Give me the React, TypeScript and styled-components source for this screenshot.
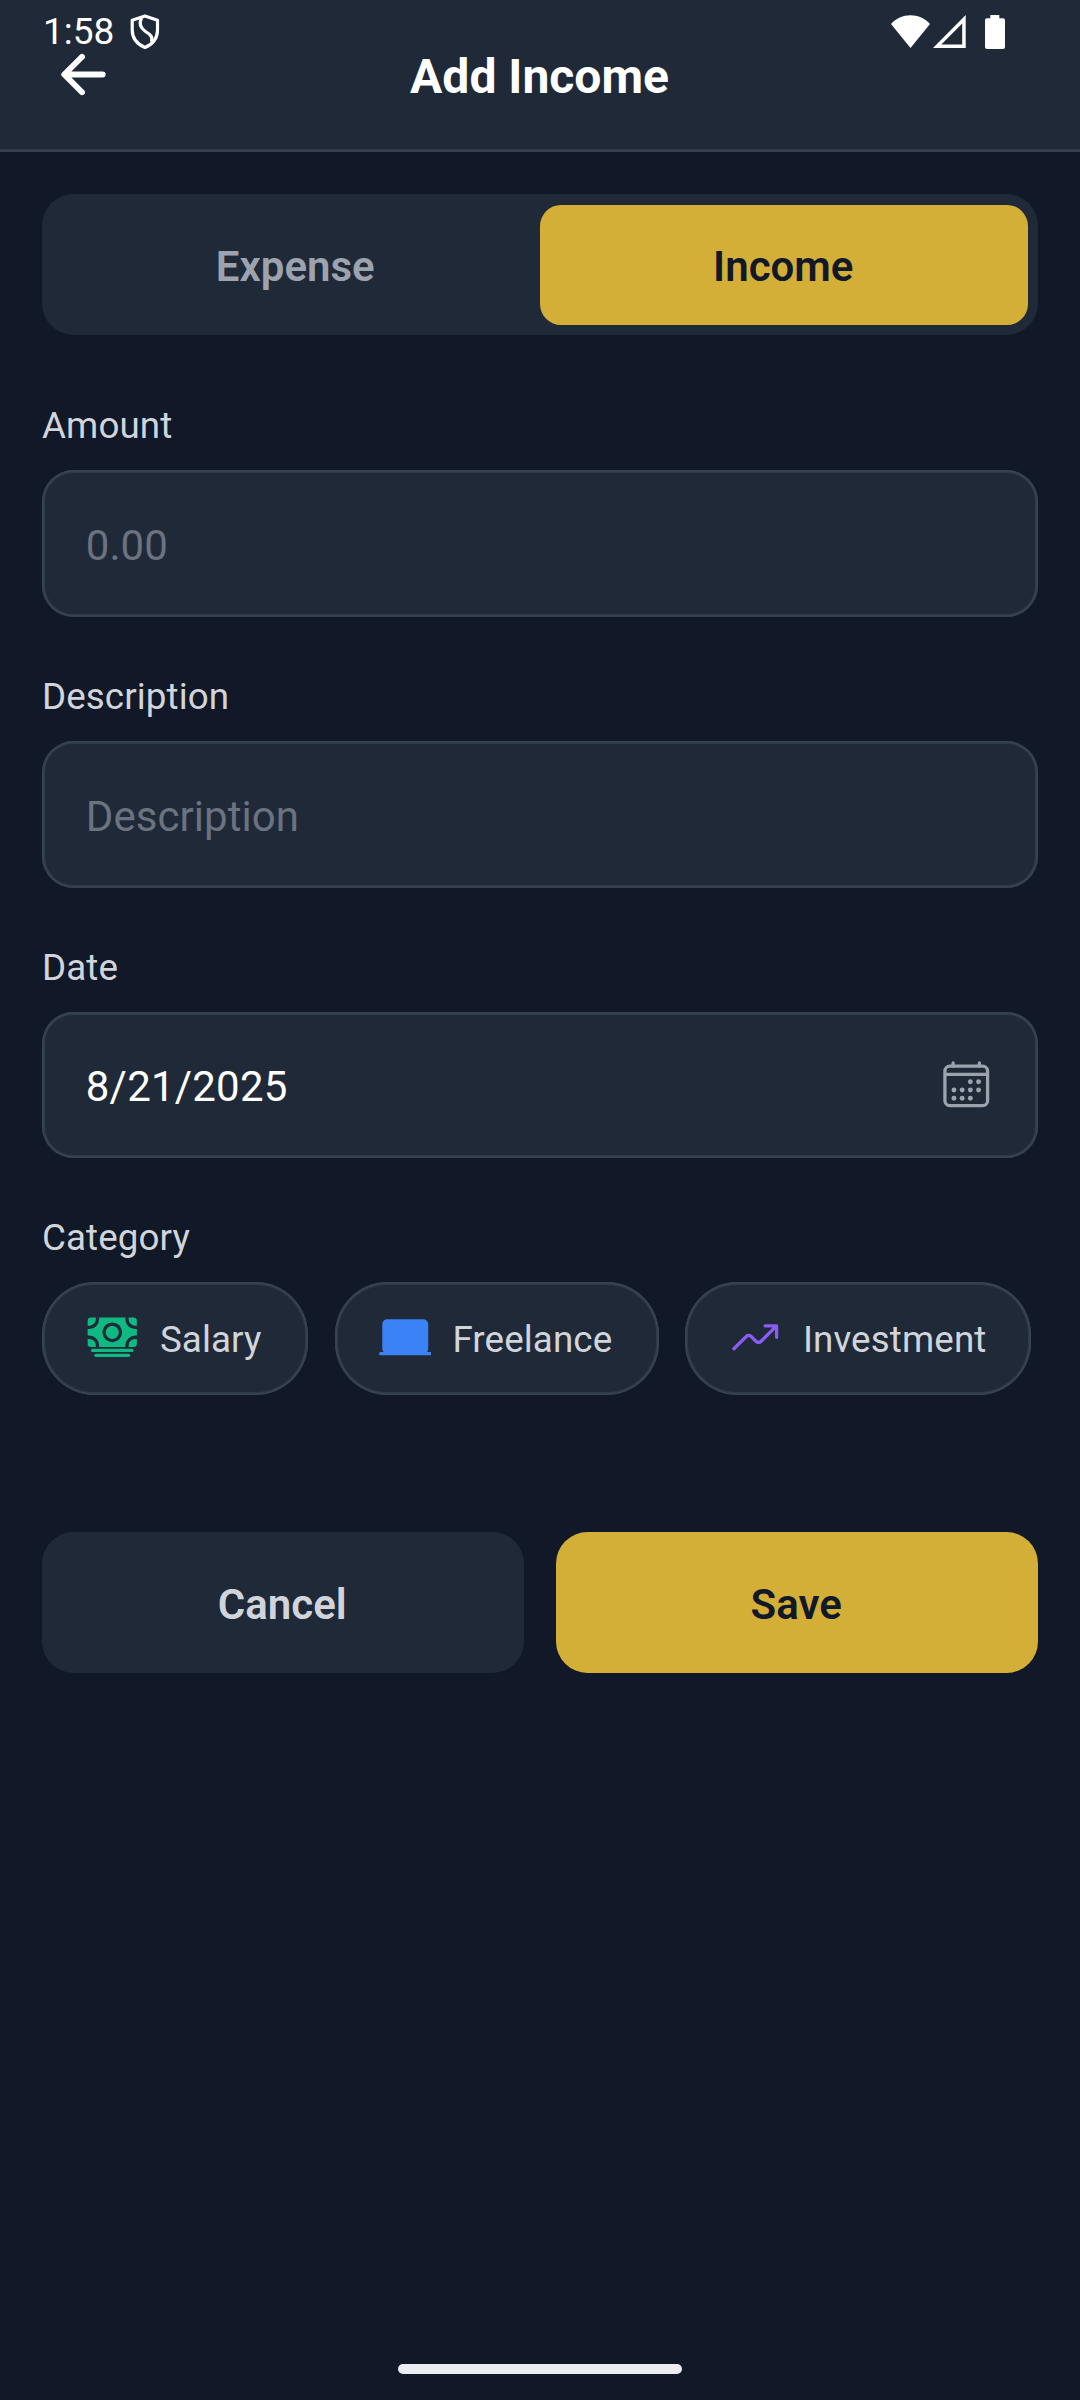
import React from "react";
import styled, { createGlobalStyle } from "styled-components";
import { IoArrowBack, IoCalendarOutline, IoCash, IoLaptop, IoTrendingUp } from "react-icons/io5";

const color = {
  bg: "#111827",
  card: "#1f2937",
  line: "#374151",
  lineSoft: "#2e3947",
  gold: "#d4af37",
  label: "#d1d5db",
  muted: "#9ca3af",
  hint: "#6b7280",
};

const outline = `inset 0 0 0 2px ${color.line}, inset 0 0 0 3px ${color.lineSoft}`;

const GlobalStyle = createGlobalStyle`
  *, *::before, *::after { box-sizing: border-box; }
  body { margin: 0; background: ${color.bg}; font-family: Roboto, sans-serif; }
  button, input { font: inherit; border: 0; margin: 0; }
  svg { display: block; flex: none; }
`;

const Screen = styled.div`
  position: relative;
  display: flex;
  flex-direction: column;
  width: 1080px;
  height: 2400px;
  background: ${color.bg};
`;

const StatusBar = styled.div`
  position: absolute;
  inset: 0 0 auto 0;
  height: 63px;
  display: flex;
  align-items: center;
  justify-content: space-between;
  padding: 0 75px 0 43px;
  color: #fff;
`;

const StatusGroup = styled.div<{ $gap: number }>`
  display: flex;
  align-items: center;
  gap: ${(p) => p.$gap}px;
`;

const BatterySlot = styled.div`
  padding-left: 16px;
`;

const Clock = styled.span`
  font-size: 37px;
  line-height: 44px;
  width: 72px;
`;

const Header = styled.header`
  display: grid;
  grid-template-columns: 63px 1fr 63px;
  align-items: start;
  height: 152px;
  padding: 43px 52px 0;
  background: ${color.card};
  box-shadow: inset 0 -2px 0 ${color.line}, inset 0 -3px 0 ${color.lineSoft};
`;

const BackButton = styled.button`
  padding: 0;
  background: none;
  color: #fff;
`;

const Title = styled.h1`
  margin: 1px 1px 0 0;
  font-size: 48px;
  line-height: 65px;
  font-weight: 700;
  text-align: center;
  color: #fff;
`;

const Form = styled.main`
  display: flex;
  flex-direction: column;
  padding: 42px;
`;

const Toggle = styled.div`
  display: grid;
  grid-template-columns: 1fr 1fr;
  height: 141px;
  padding: 11px 10px 10px;
  margin-bottom: 63px;
  border-radius: 31.5px;
  background: ${color.card};
`;

const ToggleOption = styled.button<{ $active?: boolean }>`
  border-radius: 21px;
  padding: 3px 1.5px 0 0;
  font-size: 42px;
  font-weight: 600;
  background: ${(p) => (p.$active ? color.gold : "transparent")};
  color: ${(p) => (p.$active ? color.bg : color.muted)};
`;

const Field = styled.section<{ $height?: number }>`
  display: flex;
  flex-direction: column;
  height: ${(p) => p.$height ?? 271}px;
`;

const Label = styled.label`
  flex: none;
  height: 72px;
  padding-top: 3px;
  font-size: 36.75px;
  line-height: 49px;
  letter-spacing: 0.1px;
  color: ${color.label};
`;

const InputBox = styled.div<{ $height?: number }>`
  display: flex;
  align-items: center;
  height: ${(p) => p.$height ?? 147}px;
  padding: 0 45.6px 0 43.8px;
  border-radius: 31.5px;
  background: ${color.card};
  box-shadow: ${outline};
  color: ${color.muted};
  svg { margin-top: -1px; }
`;

const Input = styled.input`
  flex: 1;
  min-width: 0;
  padding: 4px 0 0;
  background: none;
  outline: none;
  font-size: 42px;
  letter-spacing: 0.06px;
  color: #fff;
  &::placeholder { color: ${color.hint}; opacity: 1; }
`;

const DateInput = styled(Input)`
  padding-top: 3px;
  letter-spacing: 0.2px;
`;

const Chips = styled.div`
  display: flex;
  gap: 26.5px;
`;

const Chip = styled.button<{ $tint: string; $width: number }>`
  display: flex;
  align-items: center;
  gap: 21.2px;
  width: ${(p) => p.$width}px;
  height: 113px;
  padding: 0 0 0 44.2px;
  border-radius: 52.5px;
  background: ${color.card};
  box-shadow: ${outline};
  font-size: 36.75px;
  letter-spacing: 0.12px;
  color: ${color.label};
  svg { color: ${(p) => p.$tint}; margin-top: -2px; }
`;

const ChipText = styled.span`
  padding-top: 2px;
`;

const Actions = styled.div`
  display: grid;
  grid-template-columns: 1fr 1fr;
  gap: 32px;
  margin-top: 137px;
`;

const ActionButton = styled.button<{ $primary?: boolean }>`
  height: 141px;
  padding: 4px 1.5px 0 0;
  border-radius: 31.5px;
  font-size: 42px;
  font-weight: 600;
  background: ${(p) => (p.$primary ? color.gold : color.card)};
  color: ${(p) => (p.$primary ? color.bg : color.label)};
`;

const HomeIndicator = styled.div`
  width: 284px;
  height: 10px;
  margin: auto auto 26px;
  border-radius: 5px;
  background: #ecedee;
`;

const ShieldIcon = () => (
  <svg width="30" height="36" viewBox="0 0 30 36" fill="none" stroke="currentColor" strokeWidth="3.2" strokeLinejoin="round">
    <path d="M15 2 L27.5 6.2 V16 C27.5 24.5 22 30.5 15 33.5 C8 30.5 2.2 24.5 2.2 16 V6.2 Z" />
    <path d="M11.5 4 C8.5 10 10.5 14 15.5 17.5 C20.5 20.5 23 23 21.5 28" />
  </svg>
);

const WifiIcon = () => (
  <svg width="39" height="34" viewBox="0 0 39 34" fill="currentColor">
    <path d="M0 9 C5 3.2 12 .3 19.5 .3 S34 3.2 39 9 L19.5 33 Z" />
  </svg>
);

const SignalIcon = () => (
  <svg width="33" height="34" viewBox="0 0 33 34" fill="currentColor" fillRule="evenodd">
    <path d="M0 33 L32.7 0 V33 Z M8.3 29.5 H29.2 V8.5 Z" />
  </svg>
);

const BatteryIcon = () => (
  <svg width="20" height="34" viewBox="0 0 20 34" fill="currentColor">
    <path d="M5.3 0 H14.3 V3.3 H18 A2 2 0 0 1 20 5.3 V32 A2 2 0 0 1 18 34 H2 A2 2 0 0 1 0 32 V5.3 A2 2 0 0 1 2 3.3 H5.3 Z" />
  </svg>
);

const categories = [
  { name: "Salary", tint: "#10b981", width: 266, Icon: IoCash },
  { name: "Freelance", tint: "#3b82f6", width: 324, Icon: IoLaptop },
  { name: "Investment", tint: "#8b5cf6", width: 346, Icon: IoTrendingUp },
];

export default function App() {
  return (
    <Screen>
      <GlobalStyle />
      <Header>
        <BackButton aria-label="Back">
          <IoArrowBack size={63} />
        </BackButton>
        <Title>Add Income</Title>
      </Header>
      <StatusBar>
        <StatusGroup $gap={14.5}>
          <Clock>1:58</Clock>
          <ShieldIcon />
        </StatusGroup>
        <StatusGroup $gap={3}>
          <WifiIcon />
          <SignalIcon />
          <BatterySlot>
            <BatteryIcon />
          </BatterySlot>
        </StatusGroup>
      </StatusBar>
      <Form>
        <Toggle>
          <ToggleOption>Expense</ToggleOption>
          <ToggleOption $active>Income</ToggleOption>
        </Toggle>
        <Field>
          <Label htmlFor="amount">Amount</Label>
          <InputBox>
            <Input id="amount" placeholder="0.00" />
          </InputBox>
        </Field>
        <Field>
          <Label htmlFor="description">Description</Label>
          <InputBox>
            <Input id="description" placeholder="Description" />
          </InputBox>
        </Field>
        <Field $height={270}>
          <Label htmlFor="date">Date</Label>
          <InputBox $height={146}>
            <DateInput id="date" defaultValue="8/21/2025" />
            <IoCalendarOutline size={52.5} />
          </InputBox>
        </Field>
        <Field $height={185}>
          <Label as="div">Category</Label>
          <Chips>
            {categories.map(({ name, tint, width, Icon }) => (
              <Chip key={name} $tint={tint} $width={width}>
                <Icon size={52.5} />
                <ChipText>{name}</ChipText>
              </Chip>
            ))}
          </Chips>
        </Field>
        <Actions>
          <ActionButton>Cancel</ActionButton>
          <ActionButton $primary>Save</ActionButton>
        </Actions>
      </Form>
      <HomeIndicator />
    </Screen>
  );
}
